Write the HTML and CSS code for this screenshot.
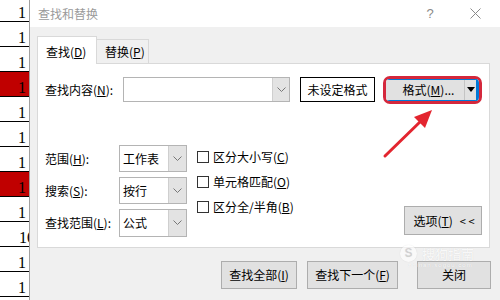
FILE: index.html
```html
<!DOCTYPE html>
<html>
    <head>
        <title>查找和替换</title>
        <meta charset="UTF-8">
        <link rel="stylesheet" href="styles.css">
    </head>
    <body>
        <div class="sheet">
            <div class="cell first">1</div>
            <div class="cell">1</div>
            <div class="cell">1</div>
            <div class="cell red">1</div>
            <div class="cell">1</div>
            <div class="cell">1</div>
            <div class="cell">1</div>
            <div class="cell red">1</div>
            <div class="cell">1</div>
            <div class="cell clip">10</div>
            <div class="cell">1</div>
            <div class="cell">1</div>
        </div>

        <div class="dialog">
            <div class="titlebar">
                <span class="title">查找和替换</span>
                <span class="ctrl help">?</span>
                <span class="ctrl close">
                    <svg width="11" height="11" viewBox="0 0 11 11"><path d="M0.5 0.5 L10.5 10.5 M10.5 0.5 L0.5 10.5" stroke="#8a8a8a" stroke-width="1"/></svg>
                </span>
            </div>

            <div class="content">
                <div class="tabs">
                    <div class="tab on">查找(<u>D</u>)</div>
                    <div class="tab">替换(<u>P</u>)</div>
                </div>

                <div class="panel">
                    <div class="find-row">
                        <span class="find-label">查找内容(<u>N</u>):</span>
                        <div class="combo">
                            <span class="drop">
                                <svg width="9" height="5" viewBox="0 0 9 5"><polyline points="0.5,0.5 4.5,4.5 8.5,0.5" fill="none" stroke="#777"/></svg>
                            </span>
                        </div>
                        <div class="nofmt">未设定格式</div>
                        <div class="fmt-ring">
                            <div class="fmt-btn">
                                <span class="fmt-main">格式(<u>M</u>)...</span>
                                <span class="fmt-arrow"><span class="tri"></span></span>
                            </div>
                        </div>
                    </div>

                    <div class="opts">
                        <div class="opt-grid">
                            <span>范围(<u>H</u>):</span>
                            <div class="select">
                                <span class="val">工作表</span>
                                <span class="drop"><svg width="9" height="5" viewBox="0 0 9 5"><polyline points="0.5,0.5 4.5,4.5 8.5,0.5" fill="none" stroke="#777"/></svg></span>
                            </div>
                            <span>搜索(<u>S</u>):</span>
                            <div class="select">
                                <span class="val">按行</span>
                                <span class="drop"><svg width="9" height="5" viewBox="0 0 9 5"><polyline points="0.5,0.5 4.5,4.5 8.5,0.5" fill="none" stroke="#777"/></svg></span>
                            </div>
                            <span>查找范围(<u>L</u>):</span>
                            <div class="select tall">
                                <span class="val">公式</span>
                                <span class="drop"><svg width="9" height="5" viewBox="0 0 9 5"><polyline points="0.5,0.5 4.5,4.5 8.5,0.5" fill="none" stroke="#777"/></svg></span>
                            </div>
                        </div>

                        <div class="checks">
                            <div class="check"><span class="box"></span>区分大小写(<u>C</u>)</div>
                            <div class="check"><span class="box"></span>单元格匹配(<u>O</u>)</div>
                            <div class="check"><span class="box"></span>区分全/半角(<u>B</u>)</div>
                        </div>

                        <button class="btn opt-btn">选项(<u>T</u>)<span class="chev">&lt; &lt;</span></button>
                    </div>
                </div>

                <div class="actions">
                    <button class="btn find-all">查找全部(<u>I</u>)</button>
                    <button class="btn find-next">查找下一个(<u>F</u>)</button>
                    <button class="btn close-btn">关闭</button>
                </div>
            </div>
        </div>

        <!-- annotation layer -->
        <svg class="arrow" width="500" height="300" viewBox="0 0 500 300">
            <line x1="385" y1="156" x2="422" y2="120" stroke="#e3252f" stroke-width="3" stroke-linecap="round"/>
            <polygon points="432,110 414,117 425,128" fill="#e3252f"/>
        </svg>
        <div class="watermark">
            <span class="wm-logo">S</span><span class="wm-text">搜狗指南</span>
            <div class="wm-url">zhinan.sogou.com</div>
        </div>
    </body>
</html>
```

FILE: styles.css
```css
* {
    box-sizing: border-box;
}

body {
    margin: 0;
    width: 500px;
    height: 300px;
    overflow: hidden;
    display: flex;
    position: relative;
    background: #fff;
    color: #000;
    font-family: "Noto Sans CJK SC", sans-serif;
    font-size: 12px;
    line-height: 16px;
}

/* spreadsheet strip on the left */
.sheet {
    width: 29px;
    flex: none;
}

.cell {
    height: 25px;
    border-bottom: 1px solid #000;
    display: flex;
    justify-content: flex-end;
    align-items: flex-end;
    padding-right: 3px;
    font-family: "Liberation Serif", serif;
    font-size: 16px;
    line-height: 16px;
}

.cell.first {
    height: 22px;
}

.cell.red {
    background: #c00000;
}

.cell.clip {
    justify-content: flex-start;
    padding: 0 0 0 19px;
    overflow: hidden;
    white-space: nowrap;
}

/* dialog */
.dialog {
    flex: 1;
    background: #f0f0f0;
    border-left: 1px solid #a0a0a0;
}

.titlebar {
    height: 27px;
    background: #fff;
    display: flex;
    align-items: center;
    padding-left: 8px;
    color: #9a9a9a;
}

.title {
    flex: 1;
}

.ctrl {
    display: flex;
    justify-content: center;
    align-items: center;
    color: #8a8a8a;
}

.help {
    width: 40px;
    font-family: "Liberation Sans", sans-serif;
    font-size: 13px;
}

.close {
    width: 50px;
}

.content {
    padding: 9px 0 0 7px;
}

.tabs {
    display: flex;
    align-items: flex-end;
    height: 28px;
    margin-bottom: -1px;
}

.tab {
    height: 25px;
    width: 52px;
    padding-left: 8px;
    display: flex;
    align-items: center;
    background: #f0f0f0;
    border: 1px solid #d9d9d9;
    border-left: none;
}

.tab.on {
    position: relative;
    z-index: 1;
    width: 60px;
    height: 28px;
    padding-top: 2px;
    background: #fff;
    border-left: 1px solid #d9d9d9;
    border-bottom: none;
}

.panel {
    width: 453px;
    height: 185px;
    background: #fff;
    border: 1px solid #d9d9d9;
    padding: 13px 7px 0 7px;
}

.find-row {
    display: flex;
    align-items: center;
    height: 25px;
}

.find-label {
    width: 78px;
}

.combo {
    width: 167px;
    height: 25px;
    border: 1px solid #b4b4b4;
    display: flex;
    justify-content: flex-end;
}

.drop {
    width: 17px;
    background: #e3e3e3;
    border-left: 1px solid #cfcfcf;
    display: flex;
    align-items: center;
    justify-content: center;
}

.nofmt {
    margin-left: 10px;
    width: 75px;
    height: 25px;
    border: 1px solid #000;
    display: flex;
    align-items: center;
    justify-content: center;
}

.fmt-ring {
    margin-left: 8px;
    width: 99px;
    height: 28px;
    border: 3px solid #d4283c;
    border-radius: 7px;
    display: flex;
    overflow: hidden;
}

.fmt-btn {
    flex: 1;
    display: flex;
    background: #e1e1e1;
    border: 1px solid #0078d7;
    border-left-color: #e1e1e1;
    border-right-width: 3px;
}

.fmt-main {
    flex: 1;
    display: flex;
    align-items: center;
    justify-content: center;
    padding-left: 6px;
}

.fmt-arrow {
    width: 12px;
    border-left: 1px solid #c4c4c4;
    display: flex;
    align-items: center;
    justify-content: center;
}

.tri {
    width: 0;
    height: 0;
    border-left: 4px solid transparent;
    border-right: 4px solid transparent;
    border-top: 5px solid #000;
}

/* options block */
.opts {
    display: flex;
    margin-top: 43px;
}

.opt-grid {
    display: grid;
    grid-template-columns: 74px 68px;
    grid-auto-rows: 27px;
    row-gap: 5px;
    align-items: center;
}

.select {
    height: 27px;
    border: 1px solid #b4b4b4;
    display: flex;
}

.select.tall {
    height: 28px;
}

.select .val {
    flex: 1;
    display: flex;
    align-items: center;
    padding-left: 3px;
}

.select .drop {
    width: 18px;
}

.checks {
    margin-left: 10px;
    margin-top: -1px;
}

.check {
    height: 25px;
    display: flex;
    align-items: center;
}

.box {
    width: 12px;
    height: 12px;
    border: 1px solid #333;
    margin-right: 4px;
}

.btn {
    height: 28px;
    padding: 0;
    background: #e1e1e1;
    border: 1px solid #adadad;
    color: #000;
    font-family: inherit;
    font-size: 12px;
    line-height: 16px;
}

.opt-btn {
    margin-left: auto;
    align-self: flex-end;
    width: 78px;
    height: 29px;
    margin-bottom: 1px;
    padding-left: 2px;
}

.chev {
    margin-left: 7px;
    font-size: 11px;
}

.actions {
    display: flex;
    justify-content: flex-end;
    width: 454px;
    margin-top: 13px;
}

.find-all {
    width: 76px;
}

.find-next {
    width: 91px;
    margin-left: 10px;
}

.close-btn {
    width: 74px;
    margin-left: 19px;
}

/* red arrow drawn over the screenshot */
.arrow {
    position: absolute;
    left: 0;
    top: 0;
    pointer-events: none;
}

.watermark {
    position: absolute;
    left: 400px;
    top: 244px;
    color: rgba(255, 255, 255, 0.85);
    text-shadow: 0 0 1px rgba(0, 0, 0, 0.12);
    pointer-events: none;
}

.wm-logo {
    display: inline-block;
    width: 17px;
    height: 17px;
    border-radius: 50%;
    background: rgba(255, 255, 255, 0.6);
    box-shadow: 0 0 1px rgba(0, 0, 0, 0.15);
    text-align: center;
    font-family: "Liberation Sans", sans-serif;
    font-weight: bold;
    font-size: 12px;
    line-height: 17px;
    color: rgba(0, 0, 0, 0.08);
    vertical-align: middle;
}

.wm-text {
    margin-left: 5px;
    font-size: 13px;
    vertical-align: middle;
}

.wm-url {
    font-family: "Liberation Sans", sans-serif;
    font-size: 6px;
    line-height: 7px;
    letter-spacing: 1px;
    padding-left: 8px;
}
```
